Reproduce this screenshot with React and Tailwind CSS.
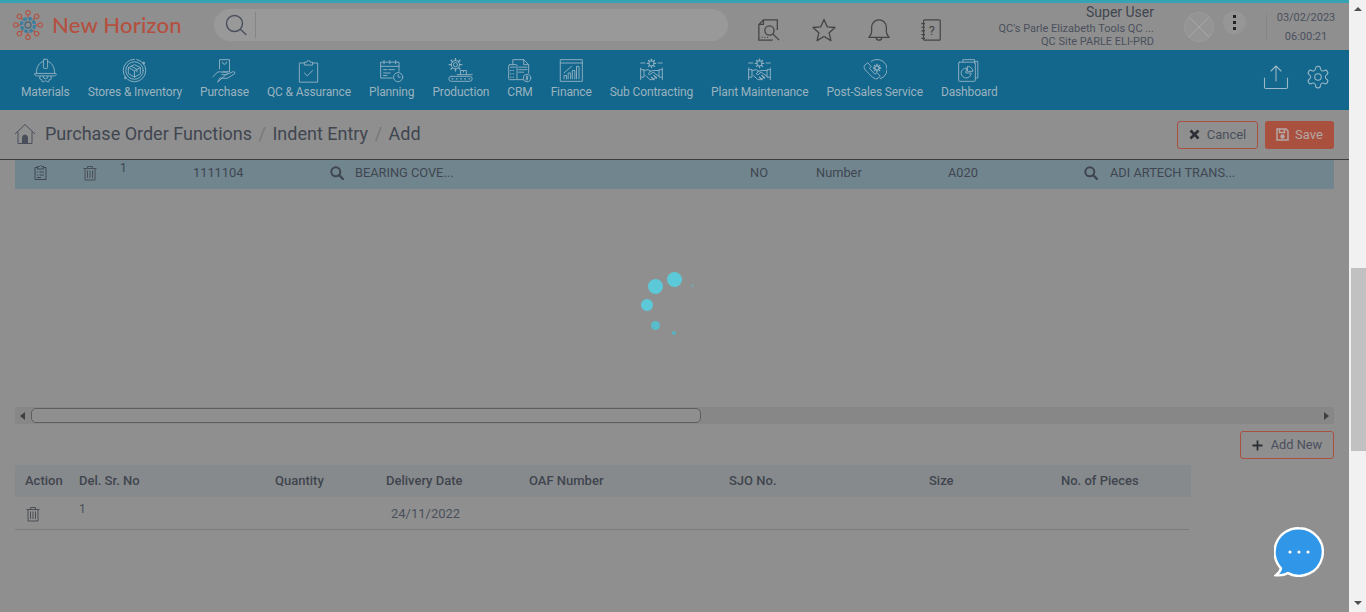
import React from "react";

const Ico = ({ size = 25, sw = 1.15, children, className = "" }) => (
  <svg width={size} height={size} viewBox="0 0 30 30" fill="none" stroke="currentColor" strokeWidth={sw} strokeLinecap="round" strokeLinejoin="round" className={className}>
    {children}
  </svg>
);

const gearTeeth = (cx, cy, r1, r2, n = 8) => {
  const out = [];
  for (let i = 0; i < n; i++) {
    const a = (i * 2 * Math.PI) / n;
    out.push(
      <line key={i} x1={cx + r1 * Math.cos(a)} y1={cy + r1 * Math.sin(a)} x2={cx + r2 * Math.cos(a)} y2={cy + r2 * Math.sin(a)} strokeWidth="1.6" />
    );
  }
  return out;
};

const Handshake = () => (
  <Ico>
    <circle cx="15" cy="6.5" r="3.2" />
    {gearTeeth(15, 6.5, 3.2, 5)}
    <path d="M2 6h5M23 6h5M2 12v14M28 12v14M2 14h4v9H2M28 14h-4v9h4" />
    <path d="M6 15l5-1 3 2-3 3 2 1 4-3 7 5M24 15h-6l-5 1M8 21l5 5 3 0 5-3" />
    <path d="M15 23l3 3M18 21l3 3" strokeWidth="1.6" />
  </Ico>
);

const navItems = [
  {
    label: "Materials",
    icon: (
      <Ico>
        <path d="M4 18.500C4 10 8 5 12.500 4M17.500 4C22 5 26 10 26 18.500" />
        <path d="M2 19.500c0 1.500 2 2 3 2h20c1 0 3-.5 3-2 0-.5-.5-1-1-1H3c-.5 0-1 .5-1 1z" />
        <rect x="12.500" y="1.500" width="5" height="11" rx="1" />
        <path d="M8.500 22l-.5 3 2.500 1 .5 2.500h2l1-1h2l1 1h2l.5-2.500 2.500-1-.5-3" />
        <path d="M12 22a3 3 0 0 0 6 0" />
      </Ico>
    ),
  },
  {
    label: "Stores & Inventory",
    icon: (
      <Ico>
        <circle cx="15" cy="15" r="13.500" strokeDasharray="30 3" />
        <circle cx="15" cy="15" r="10.500" />
        <path d="M8 11.500l7-3.500 7 3.500v7.500l-7 4-7-4zM8 11.500l7 4 7-4M15 15.500v7.500M11 9.700l7 4v3" />
        <circle cx="26" cy="6" r="1" fill="currentColor" />
        <circle cx="4" cy="24" r="1" fill="currentColor" />
      </Ico>
    ),
  },
  {
    label: "Purchase",
    icon: (
      <Ico>
        <path d="M9 13V2h12v14.500h-8" />
        <path d="M12.500 5a2.500 2.500 0 0 0 5 0" />
        <path d="M1 22.500l5-5c2-1.500 4-1 6-.5h5c2 0 2 3 0 3h-5M17 20l8-3.500c2-.5 3 1 2 2.500l-8 5c-3 1-7 0-9.500 0L7 28.500z" />
      </Ico>
    ),
  },
  {
    label: "QC & Assurance",
    icon: (
      <Ico>
        <path d="M10 6H4v23h22V6h-6" />
        <path d="M10 8V5h3a2 2 0 0 1 4 0h3v3z" />
        <path d="M10 18l3.500 3.500 6.500-6.500" />
      </Ico>
    ),
  },
  {
    label: "Planning",
    icon: (
      <Ico>
        <path d="M16 24H2V5h22v11" />
        <path d="M2 10h22M6 3v4M13 3v4M20 3v4M5.500 14h4M11.500 14h7M5.500 18h8M5.500 21h4" />
        <circle cx="23" cy="23" r="5.500" />
        <path d="M23 20v3h2.500" />
      </Ico>
    ),
  },
  {
    label: "Production",
    icon: (
      <Ico>
        <circle cx="9" cy="8" r="2.500" />
        <circle cx="9" cy="8" r="5" />
        {gearTeeth(9, 8, 5, 7.500)}
        <path d="M15 20v-5h7v5M11 20h18M18.500 15v2" />
        <rect x="1" y="22" width="28" height="6" rx="3" />
        <path d="M5 25h1M10 25h1M15 25h1M20 25h1M25 25h1" strokeWidth="1.500" />
      </Ico>
    ),
  },
  {
    label: "CRM",
    icon: (
      <Ico>
        <path d="M7 8V2h13l6 6v10M20 2v6h6M12 26h7" />
        <rect x="2" y="8" width="10" height="18" rx="1" />
        <path d="M4 11h6M4 15h1M7 15h1M4 19h1M7 19h1M4 23h1M7 23h1M14 11h10M14 14h10M14 17h6" />
        <circle cx="24" cy="24" r="4.500" />
        <path d="M24 21.500v5M25.300 22.500h-2v1.500h1.500v1.300h-2" />
      </Ico>
    ),
  },
  {
    label: "Finance",
    icon: (
      <Ico>
        <rect x="2" y="2" width="26" height="26" />
        <path d="M2 6h26" />
        <path d="M6 25v-4h3v4M11 25v-7h3v7M16 25v-10h3v10M21 25V10h3v15M6 18l9-8" />
      </Ico>
    ),
  },
  { label: "Sub Contracting", icon: <Handshake /> },
  { label: "Plant Maintenance", icon: <Handshake /> },
  {
    label: "Post-Sales Service",
    icon: (
      <Ico>
        <path d="M11 4a12 12 0 1 1 11 21" />
        <path d="M3 9l4-3.500 4 5-2 2 6.500 7 2.500-2 4 4.500-4 3c-2 .5-5-1-8-4.500S2 14 2.500 11z" />
        <circle cx="18" cy="12" r="2.500" />
        {gearTeeth(18, 12, 2.500, 4.500)}
      </Ico>
    ),
  },
  {
    label: "Dashboard",
    icon: (
      <Ico>
        <path d="M7 5V2h14v4M21 4h4v20h-3" />
        <rect x="2" y="5" width="20" height="23" rx="1" />
        <path d="M11 12a6 6 0 1 0 6 6h-6z" />
        <path d="M13 10a6 6 0 0 1 6 6h-6z" />
      </Ico>
    ),
  },
];

const Trash = ({ className = "" }) => (
  <svg width="16" height="16" viewBox="0 0 16 16" fill="none" stroke="currentColor" strokeWidth="1" className={className}>
    <path d="M1.500 3.500h13M5.500 3.500V1.500h5v2M3 3.500V15h10V3.500M5.500 5.500V13M8 5.500V13M10.500 5.500V13" />
  </svg>
);

const SearchSolid = () => (
  <svg width="14" height="14" viewBox="0 0 14 14" fill="none" stroke="#3f4650" strokeWidth="2">
    <circle cx="5.800" cy="5.800" r="4.500" />
    <path d="M9 9l4 4" strokeLinecap="round" strokeWidth="2.400" />
  </svg>
);

const Logo = () => (
  <svg width="30" height="30" viewBox="0 0 32 32" fill="none" stroke="#b5503f" strokeWidth="1.100">
    {[0, 45, 90, 135, 180, 225, 270, 315].map((d) => (
      <g key={d} transform={`rotate(${d} 16 16)`}>
        <circle cx="16" cy="3" r="2.400" />
        <path d="M16 5.400v3" />
      </g>
    ))}
    <circle cx="16" cy="16" r="7" stroke="#3d7f9e" strokeWidth="3.500" strokeDasharray="4 1.500" />
    <circle cx="16" cy="16" r="3.200" stroke="#4a6a7d" strokeWidth="1.500" />
  </svg>
);

export default function App() {
  return (
    <div className="flex h-[612px] w-full overflow-hidden bg-[#8f8f8f] text-[#3f4650] font-['Roboto',sans-serif]">
      <div className="relative flex-1 min-w-0 flex flex-col">
        {/* top bar */}
        <header className="h-[50px] shrink-0 border-t-[3px] border-[#35a3b4] bg-[#8f8f8f] flex items-center">
          <div className="ml-[13px] -mt-[3px] flex items-center w-[201px]">
            <Logo />
            <span className="ml-[9px] text-[22px] font-medium leading-none text-[#b5503f] font-['Lato',sans-serif] tracking-[0.2px]">New Horizon</span>
          </div>
          <div className="-mt-[3px] h-[32px] w-[514px] rounded-full bg-[#999999] flex items-center pl-[10px]">
            <svg width="24" height="24" viewBox="0 0 24 24" fill="none" stroke="#4a4f5c" strokeWidth="1.400" strokeLinecap="round">
              <circle cx="10.500" cy="10.500" r="8" />
              <path d="M16.500 16.500l5.500 5" />
            </svg>
            <div className="ml-[7px] h-[26px] w-px bg-[#858585]" />
          </div>
          <div className="ml-[29px] flex items-center gap-[31px] pt-[7px] text-[#454545]">
            <svg width="24" height="24" viewBox="0 0 26 26" fill="none" stroke="currentColor" strokeWidth="1.400">
              <path d="M22 13V2H7L2 7v17h15M7 2v5H2" />
              <circle cx="13.500" cy="13.500" r="5" />
              <path d="M17 17l7 7M5 21h1M8 21h1M11 21h1" />
            </svg>
            <svg width="24" height="24" viewBox="0 0 26 26" fill="none" stroke="currentColor" strokeWidth="1.400" strokeLinejoin="round">
              <path d="M13 1.500l3.500 8 8.500.8-6.400 5.700 1.900 8.500L13 20l-7.500 4.500 1.900-8.500L1 10.300l8.500-.8z" />
            </svg>
            <svg width="24" height="24" viewBox="0 0 26 26" fill="none" stroke="currentColor" strokeWidth="1.400" strokeLinejoin="round">
              <path d="M2 21c2-2 3-3 3-6V10a8 8 0 0 1 16 0v5c0 3 1 4 3 6z" />
              <path d="M10 21a3 3 0 0 0 6 0" />
            </svg>
            <svg width="24" height="24" viewBox="0 0 24 26" fill="none" stroke="currentColor" strokeWidth="1.300" className="-ml-[3px]">
              <rect x="4" y="2" width="18" height="22" rx="1" />
              <path d="M1.500 6h4M1.500 10h4M1.500 14h4M1.500 18h4M1.500 22h4" />
              <text x="13" y="18" fontSize="14" fill="currentColor" stroke="none" textAnchor="middle" fontFamily="Roboto">?</text>
            </svg>
          </div>
          <div className="ml-auto w-[200px] text-right leading-none -mt-[1px]">
            <div className="text-[14px] leading-[16px] text-[#3f4650]">Super User</div>
            <div className="text-[11px] leading-[13px] mt-[2px] text-[#4a4f5c]">QC's Parle Elizabeth Tools QC ...</div>
            <div className="text-[11px] leading-[13px] text-[#4a4f5c]">QC Site PARLE ELI-PRD</div>
          </div>
          <div className="ml-[30px] h-[30px] w-[30px] rounded-full bg-[#949494] border border-[#9c9c9c] overflow-hidden">
            <svg width="28" height="28" viewBox="0 0 28 28" stroke="#a8a8a8" strokeWidth="1">
              <path d="M4 4l20 20M24 4L4 24" />
            </svg>
          </div>
          <div className="ml-[9px] -mt-[8px] h-[23px] w-[23px] rounded-full bg-[#969696] flex flex-col items-center justify-center gap-[3px]">
            <span className="h-[3px] w-[3px] bg-[#222]" />
            <span className="h-[3px] w-[3px] bg-[#222]" />
            <span className="h-[3px] w-[3px] bg-[#222]" />
          </div>
          <div className="ml-[20px] h-[26px] w-px bg-[#858585]" />
          <div className="w-[78px] mr-[4px] text-center text-[11px] leading-[19px] text-[#4a4f5c]">
            <div>03/02/2023</div>
            <div>06:00:21</div>
          </div>
        </header>

        {/* module nav */}
        <nav className="h-[60px] shrink-0 bg-[#13668c] flex items-start pl-[21px] pr-[18px]">
          <div className="flex gap-[18px]">
            {navItems.map((item) => (
              <div key={item.label} className="flex flex-col items-center text-[#8fb0c0] pt-[8px]">
                <div className="h-[25px]">{item.icon}</div>
                <span className="text-[12px] tracking-[-0.14px] leading-[18px] whitespace-nowrap text-[#9ab3bf]">{item.label}</span>
              </div>
            ))}
          </div>
          <div className="ml-auto flex items-center gap-[16px] pt-[14px] text-[#9ab8c6]">
            <svg width="26" height="26" viewBox="0 0 26 26" fill="none" stroke="currentColor" strokeWidth="1.100" strokeLinecap="round" strokeLinejoin="round">
              <path d="M13 2v15M8 7l5-5 5 5" />
              <path d="M1.500 14v9c0 1 .5 1.500 1.500 1.500h20c1 0 1.500-.5 1.500-1.500v-9" />
            </svg>
            <svg width="26" height="26" viewBox="0 0 24 24" fill="none" stroke="currentColor" strokeWidth="1" strokeLinecap="round" strokeLinejoin="round">
              <path d="M12.220 2h-.44a2 2 0 0 0-2 2v.18a2 2 0 0 1-1 1.730l-.43.250a2 2 0 0 1-2 0l-.15-.080a2 2 0 0 0-2.730.730l-.220.380a2 2 0 0 0 .730 2.730l.150.100a2 2 0 0 1 1 1.720v.510a2 2 0 0 1-1 1.740l-.150.090a2 2 0 0 0-.730 2.730l.220.380a2 2 0 0 0 2.730.730l.150-.080a2 2 0 0 1 2 0l.430.250a2 2 0 0 1 1 1.730V20a2 2 0 0 0 2 2h.440a2 2 0 0 0 2-2v-.18a2 2 0 0 1 1-1.730l.430-.250a2 2 0 0 1 2 0l.150.080a2 2 0 0 0 2.730-.730l.220-.390a2 2 0 0 0-.730-2.730l-.150-.080a2 2 0 0 1-1-1.740v-.500a2 2 0 0 1 1-1.740l.150-.090a2 2 0 0 0 .730-2.730l-.220-.380a2 2 0 0 0-2.730-.730l-.150.080a2 2 0 0 1-2 0l-.430-.250a2 2 0 0 1-1-1.730V4a2 2 0 0 0-2-2z" />
              <circle cx="12" cy="12" r="3" />
            </svg>
          </div>
        </nav>

        {/* breadcrumb */}
        <div className="h-[50px] shrink-0 border-b border-[#3c3c3c] flex items-center pl-[14px] pr-[15px]">
          <svg width="22" height="22" viewBox="0 0 22 22" fill="none" stroke="#4a4f5c" strokeWidth="1" className="-mt-[2px]">
            <path d="M1 11L11 1.500 21 11M4 8.500V20.500h14V8.500" />
            <path d="M8.500 20.500v-6a2.500 2.500 0 0 1 5 0v6z" fill="#4a4f5c" />
          </svg>
          <div className="ml-[9px] -mt-[2px] flex items-center text-[18px] leading-none text-[#3f4650]">
            <span>Purchase Order Functions</span>
            <span className="mx-[6.500px] text-[#777]">/</span>
            <span>Indent Entry</span>
            <span className="mx-[6.500px] text-[#777]">/</span>
            <span>Add</span>
          </div>
          <div className="ml-auto flex items-center gap-[7px]">
            <button className="h-[28px] w-[81px] rounded-[3px] border border-[#a9503f] flex items-center justify-center gap-[7px] text-[13px] text-[#4a4f5c]">
              <svg width="11" height="11" viewBox="0 0 11 11" stroke="#2c2f36" strokeWidth="2.600"><path d="M1.500 1.500l8 8M9.500 1.500l-8 8" /></svg>
              Cancel
            </button>
            <button className="h-[28px] w-[69px] rounded-[3px] bg-[#a9503f] flex items-center justify-center gap-[6px] text-[13px] text-[#b4a7a4]">
              <svg width="13" height="13" viewBox="0 0 13 13" fill="none" stroke="#b4a7a4" strokeWidth="1.500">
                <path d="M1 1h9l2 2v9H1zM3.500 1v3.500h5V1" />
                <circle cx="6.500" cy="8.500" r="1.500" fill="#b4a7a4" />
              </svg>
              Save
            </button>
          </div>
        </div>

        {/* indent grid */}
        <div className="mx-[15px] shrink-0">
          <div className="h-[29px] pb-[4px] bg-[#71858f] flex items-center text-[12.800px] text-[#3f4650]">
            <div className="w-[50px] flex justify-center">
              <svg width="13" height="15" viewBox="0 0 13 15" fill="none" stroke="#3f4650" strokeWidth="1">
                <path d="M3.500 2.500H1v12h11v-12H9.500M3.500 1.500h2l1-1 1 1h2v2.500h-6zM3 7h1M5.500 7H10M3 10h1M5.500 10H10M3 12.500h4" />
              </svg>
            </div>
            <div className="w-[50px] flex justify-center text-[#4a4f56]"><Trash /></div>
            <div className="w-[78px] pl-[5px] -mt-[9px] text-[12px]">1</div>
            <div className="w-[137px]">1111104</div>
            <div className="w-[25px]"><SearchSolid /></div>
            <div className="w-[395px]">BEARING COVE...</div>
            <div className="w-[66px]">NO</div>
            <div className="w-[132px]">Number</div>
            <div className="w-[136px]">A020</div>
            <div className="w-[26px]"><SearchSolid /></div>
            <div>ADI ARTECH TRANS...</div>
          </div>
        </div>

        {/* horizontal scrollbar */}
        <div className="mx-[15px] mt-[218px] h-[17px] shrink-0 bg-[#878787] rounded-[2px] flex items-center relative">
          <span className="ml-[5px] h-0 w-0 border-y-[4px] border-y-transparent border-r-[5px] border-r-[#3f3f3f]" />
          <div className="ml-[6px] h-[15px] w-[670px] rounded-[5px] border border-[#5e5e5e] bg-[#8f8f8f]" />
          <span className="ml-auto mr-[5px] h-0 w-0 border-y-[4px] border-y-transparent border-l-[5px] border-l-[#3f3f3f]" />
        </div>

        <div className="flex justify-end mt-[7px] pr-[15px] shrink-0">
          <button className="h-[28px] w-[94px] rounded-[3px] border border-[#a9503f] flex items-center justify-center gap-[8px] text-[12.800px] text-[#4a4f5c]">
            <svg width="11" height="11" viewBox="0 0 11 11" stroke="#2c2f36" strokeWidth="1.800"><path d="M5.500 .5v10M.5 5.500h10" /></svg>
            Add New
          </button>
        </div>

        {/* delivery schedule */}
        <div className="ml-[15px] mt-[6px] w-[1176px] shrink-0">
          <div className="h-[32px] bg-[#878a8d] grid grid-cols-[64px_196px_111px_143px_200px_200px_132px_1fr] items-center text-[13px] font-medium text-[#40454e]">
            <span className="pl-[10px]">Action</span>
            <span>Del. Sr. No</span>
            <span>Quantity</span>
            <span>Delivery Date</span>
            <span>OAF Number</span>
            <span>SJO No.</span>
            <span>Size</span>
            <span>No. of Pieces</span>
          </div>
          <div className="h-[33px] w-[1174px] border-b border-[#7c7c7c] grid grid-cols-[64px_196px_111px_1fr] items-center text-[12px] text-[#4a4f5c]">
            <div className="pl-[10px] pt-[2px] text-[#4a4f56]"><Trash /></div>
            <div className="-mt-[8px]">1</div>
            <div />
            <div className="pl-[5px] pt-[2px] text-[13px]">24/11/2022</div>
          </div>
        </div>

        {/* loading spinner */}
        <div className="absolute left-[640px] top-[270px] h-[70px] w-[60px]">
          <span className="absolute left-[8px] top-[9px] h-[15px] w-[15px] rounded-full bg-[#5cc9d9]" />
          <span className="absolute left-[27px] top-[2px] h-[15px] w-[15px] rounded-full bg-[#5cc9d9]" />
          <span className="absolute left-[51px] top-[14px] h-[3px] w-[3px] rounded-full bg-[#7aa3aa]" />
          <span className="absolute left-[1px] top-[29px] h-[12px] w-[12px] rounded-full bg-[#5cc9d9]" />
          <span className="absolute left-[11px] top-[51px] h-[9px] w-[9px] rounded-full bg-[#58bccb]" />
          <span className="absolute left-[32px] top-[61px] h-[4px] w-[4px] rounded-full bg-[#55b3c1]" />
        </div>

        {/* chat bubble */}
        <div className="absolute left-[1274px] top-[527px]">
          <svg width="50" height="50" viewBox="0 0 50 50">
            <path d="M25 1.200a23.800 23.800 0 1 1-11 44.900c-3 2-7 2.600-12 2.200 2.500-2 4.500-4 5-7A23.800 23.800 0 0 1 25 1.200z" fill="#3096e8" stroke="#fff" strokeWidth="2.400" />
            <circle cx="16" cy="25" r="1.600" fill="#fff" />
            <circle cx="25" cy="25" r="1.600" fill="#fff" />
            <circle cx="34" cy="25" r="1.600" fill="#fff" />
          </svg>
        </div>
      </div>

      {/* page scrollbar */}
      <div className="w-[17px] shrink-0 bg-[#f1f1f1] flex flex-col items-center justify-between py-[7px]">
        <span className="h-0 w-0 border-x-[4px] border-x-transparent border-b-[4px] border-b-[#505050]" />
        <span className="h-0 w-0 border-x-[4px] border-x-transparent border-t-[4px] border-t-[#505050]" />
      </div>
      <div className="absolute right-0 top-[268px] h-[183px] w-[15px] bg-[#c1c1c1]" />
    </div>
  );
}
